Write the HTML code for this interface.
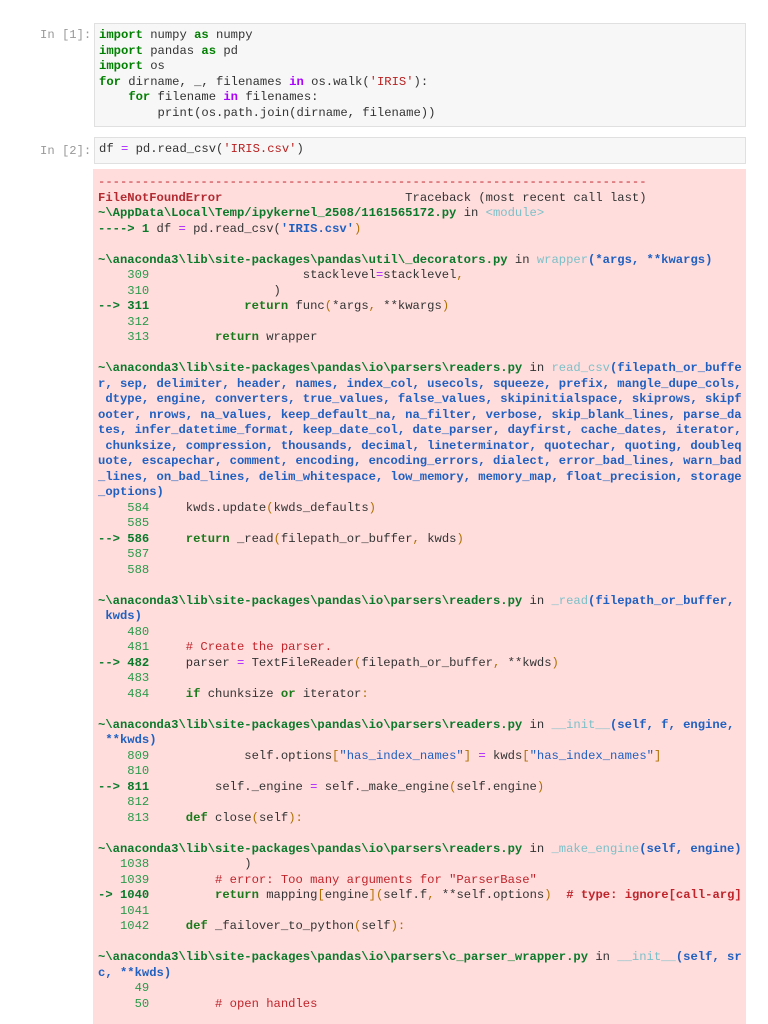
<!DOCTYPE html>
<html><head><meta charset="utf-8"><style>
html,body{margin:0;background:#fff;width:768px;height:1024px;overflow:hidden;font-family:"Liberation Mono",monospace;}
pre{margin:0;font-family:"Liberation Mono",monospace;font-size:12.2px;line-height:15.5px;white-space:pre;}
.p{position:absolute;left:40px;color:#999;font-size:12.2px;font-family:"Liberation Mono",monospace;}
.c{position:absolute;left:94px;width:650px;background:#f7f7f7;border:1px solid #e0e0e0;}
.c pre{padding:4px 4px 2px;color:#333}
.e{position:absolute;left:93px;width:653px;top:169px;height:855px;background:#fdd;overflow:hidden}
.e pre{padding:6px 5px;color:#333}
.k{color:#008000;font-weight:bold}.kw{color:#a0f;font-weight:bold}.s{color:#ba2121}.o{color:#a2f}
.g{color:#0a7a2a;font-weight:bold}.r{color:#b22b31;font-weight:bold}.n{color:#2a9a4a}.nb{color:#0a7a2a;font-weight:bold}
.b{color:#2060c0;font-weight:bold}.f{color:#7cc0c8}.y{color:#b07000}.cm{color:#c0242a}.rk{color:#1a7a1a;font-weight:bold}
</style></head><body>
<div class="p" style="top:28px">In [1]:</div>
<div class="c" style="top:23px;height:102px"><pre><span class="k">import</span> numpy <span class="k">as</span> numpy
<span class="k">import</span> pandas <span class="k">as</span> pd
<span class="k">import</span> os
<span class="k">for</span> dirname, _, filenames <span class="kw">in</span> os.walk(<span class="s">'IRIS'</span>):
    <span class="k">for</span> filename <span class="kw">in</span> filenames:
        print(os.path.join(dirname, filename))</pre></div>
<div class="p" style="top:144px">In [2]:</div>
<div class="c" style="top:137px;height:25px"><pre>df <span class="o">=</span> pd.read_csv(<span class="s">'IRIS.csv'</span>)</pre></div>
<div class="e"><pre><span class="cm">---------------------------------------------------------------------------</span>
<span class="r">FileNotFoundError</span>                         Traceback (most recent call last)
<span class="g">~\AppData\Local\Temp/ipykernel_2508/1161565172.py</span> in <span class="f">&lt;module&gt;</span>
<span class="g">----&gt; 1</span> df <span class="o">=</span> pd.read_csv(<span class="b">'IRIS.csv'</span><span class="y">)</span>

<span class="g">~\anaconda3\lib\site-packages\pandas\util\_decorators.py</span> in <span class="f">wrapper</span><span class="b">(*args, **kwargs)</span>
<span class="n">    309</span>                     stacklevel<span class="o">=</span>stacklevel<span class="y">,</span>
<span class="n">    310</span>                 )
<span class="nb">--&gt; 311</span>             <span class="rk">return</span> func<span class="y">(</span>*args<span class="y">,</span> **kwargs<span class="y">)</span>
<span class="n">    312</span>
<span class="n">    313</span>         <span class="rk">return</span> wrapper

<span class="g">~\anaconda3\lib\site-packages\pandas\io\parsers\readers.py</span> in <span class="f">read_csv</span><span class="b">(filepath_or_buffe
r, sep, delimiter, header, names, index_col, usecols, squeeze, prefix, mangle_dupe_cols,
 dtype, engine, converters, true_values, false_values, skipinitialspace, skiprows, skipf
ooter, nrows, na_values, keep_default_na, na_filter, verbose, skip_blank_lines, parse_da
tes, infer_datetime_format, keep_date_col, date_parser, dayfirst, cache_dates, iterator,
 chunksize, compression, thousands, decimal, lineterminator, quotechar, quoting, doubleq
uote, escapechar, comment, encoding, encoding_errors, dialect, error_bad_lines, warn_bad
_lines, on_bad_lines, delim_whitespace, low_memory, memory_map, float_precision, storage
_options)</span>
<span class="n">    584</span>     kwds.update<span class="y">(</span>kwds_defaults<span class="y">)</span>
<span class="n">    585</span>
<span class="nb">--&gt; 586</span>     <span class="rk">return</span> _read<span class="y">(</span>filepath_or_buffer<span class="y">,</span> kwds<span class="y">)</span>
<span class="n">    587</span>
<span class="n">    588</span>

<span class="g">~\anaconda3\lib\site-packages\pandas\io\parsers\readers.py</span> in <span class="f">_read</span><span class="b">(filepath_or_buffer,
 kwds)</span>
<span class="n">    480</span>
<span class="n">    481</span>     <span class="cm"># Create the parser.</span>
<span class="nb">--&gt; 482</span>     parser <span class="o">=</span> TextFileReader<span class="y">(</span>filepath_or_buffer<span class="y">,</span> **kwds<span class="y">)</span>
<span class="n">    483</span>
<span class="n">    484</span>     <span class="rk">if</span> chunksize <span class="rk">or</span> iterator<span class="y">:</span>

<span class="g">~\anaconda3\lib\site-packages\pandas\io\parsers\readers.py</span> in <span class="f">__init__</span><span class="b">(self, f, engine,
 **kwds)</span>
<span class="n">    809</span>             self.options<span class="y">[</span><span class="b" style="font-weight:normal">"has_index_names"</span><span class="y">]</span> <span class="o">=</span> kwds<span class="y">[</span><span class="b" style="font-weight:normal">"has_index_names"</span><span class="y">]</span>
<span class="n">    810</span>
<span class="nb">--&gt; 811</span>         self._engine <span class="o">=</span> self._make_engine<span class="y">(</span>self.engine<span class="y">)</span>
<span class="n">    812</span>
<span class="n">    813</span>     <span class="rk">def</span> close<span class="y">(</span>self<span class="y">):</span>

<span class="g">~\anaconda3\lib\site-packages\pandas\io\parsers\readers.py</span> in <span class="f">_make_engine</span><span class="b">(self, engine)</span>
<span class="n">   1038</span>             )
<span class="n">   1039</span>         <span class="cm"># error: Too many arguments for "ParserBase"</span>
<span class="nb">-&gt; 1040</span>         <span class="rk">return</span> mapping<span class="y">[</span>engine<span class="y">](</span>self.f<span class="y">,</span> **self.options<span class="y">)</span>  <span class="cm" style="font-weight:bold"># type: ignore[call-arg]</span>
<span class="n">   1041</span>
<span class="n">   1042</span>     <span class="rk">def</span> _failover_to_python<span class="y">(</span>self<span class="y">):</span>

<span class="g">~\anaconda3\lib\site-packages\pandas\io\parsers\c_parser_wrapper.py</span> in <span class="f">__init__</span><span class="b">(self, sr
c, **kwds)</span>
<span class="n">     49</span>
<span class="n">     50</span>         <span class="cm"># open handles</span></pre></div>
</body></html>
